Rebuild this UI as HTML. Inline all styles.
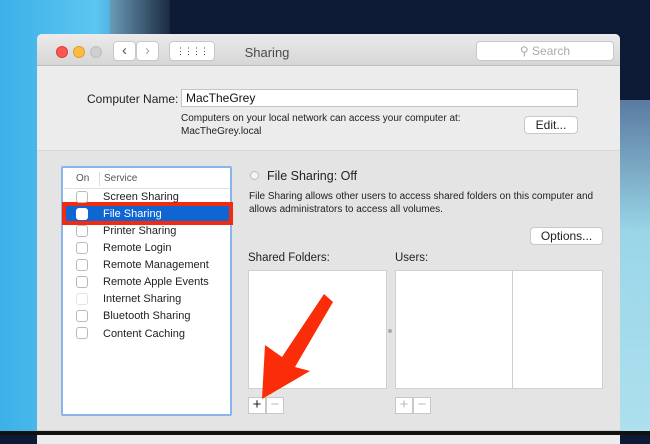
<!DOCTYPE html>
<html><head><style>
*{margin:0;padding:0;box-sizing:border-box}
body{width:650px;height:435px;overflow:hidden;position:relative;font-family:"Liberation Sans",sans-serif;background:#0d1a35}
.a{position:absolute}
.btn{position:absolute;background:#fff;border:1px solid #c8c8c8;border-radius:4px;font-size:12px;text-align:center;color:#222}
.t{position:absolute;font-size:11px;color:#222;white-space:nowrap}
.cb{position:absolute;left:76px;width:12px;height:12px;border:1px solid #b9b9b9;border-radius:3px;background:#fff}
</style></head><body>
<div class="a" style="left:0;top:0;width:160px;height:435px;background:linear-gradient(90deg,#3cb0e8,#5cc6f0 60%,#2a6ea0)"></div>
<div class="a" style="left:110px;top:0;width:60px;height:40px;background:linear-gradient(90deg,#6a9ab8,#1a2a40)"></div>
<div class="a" style="left:600px;top:100px;width:50px;height:335px;background:linear-gradient(180deg,#5a7aa0,#9ad6e8 40%,#aee0ee)"></div>
<div class="a" style="left:37px;top:34px;width:583px;height:410px;background:#ececec;border-radius:5px 5px 0 0;overflow:hidden">
 <div class="a" style="left:0;top:0;width:583px;height:32px;background:linear-gradient(#ebebeb,#d6d6d6);border-bottom:1px solid #bdbdbd"></div>
 <div class="a" style="left:19px;top:12px;width:12px;height:12px;border-radius:50%;background:#fc5753;border:1px solid #de3e3a"></div>
 <div class="a" style="left:36px;top:12px;width:12px;height:12px;border-radius:50%;background:#fdbc40;border:1px solid #de9f2c"></div>
 <div class="a" style="left:53px;top:12px;width:12px;height:12px;border-radius:50%;background:#cfcfcf;border:1px solid #bdbdbd"></div>
 <div class="btn" style="left:76px;top:7px;width:23px;height:20px;font-size:15px;line-height:17px;color:#555">&#8249;</div>
 <div class="btn" style="left:99px;top:7px;width:23px;height:20px;font-size:15px;line-height:17px;color:#aaa">&#8250;</div>
 <div class="btn" style="left:132px;top:7px;width:46px;height:20px;font-size:9px;line-height:18px;color:#444;letter-spacing:-1px">&#8942;&#8942;&#8942;&#8942;</div>
 <div class="t" style="left:200px;top:11px;width:60px;text-align:center;font-size:13px;color:#4a4a4a">Sharing</div>
 <div class="btn" style="left:439px;top:7px;width:138px;height:20px;line-height:18px;color:#aaa;font-size:12px">&#9906; Search</div>
 <div class="t" style="left:50px;top:58px;font-size:12px">Computer Name:</div>
 <div class="a" style="left:144px;top:55px;width:397px;height:18px;background:#fff;border:1px solid #c4c4c4"></div>
 <div class="t" style="left:149px;top:57px;font-size:12px;color:#111">MacTheGrey</div>
 <div class="t" style="left:144px;top:78px;font-size:10px;line-height:13px">Computers on your local network can access your computer at:<br>MacTheGrey.local</div>
 <div class="btn" style="left:487px;top:82px;width:54px;height:18px;line-height:16px">Edit...</div>
 <div class="a" style="left:0;top:116px;width:583px;height:1px;background:#d8d8d8"></div>
 <div class="a" style="left:0;top:117px;width:583px;height:280px;background:#e4e4e4"></div>
 <div class="a" style="left:0;top:396px;width:583px;height:1px;background:#d0d0d0"></div>
</div>
<div class="a" style="left:61px;top:166px;width:171px;height:250px;background:#fff;border:2px solid #8ab4ec;border-radius:2px"></div>
<div class="t" style="left:76px;top:173px;font-size:10px;color:#555">On</div>
<div class="a" style="left:99px;top:172px;width:1px;height:14px;background:#ddd"></div>
<div class="t" style="left:104px;top:173px;font-size:10px;color:#555">Service</div>
<div class="a" style="left:64px;top:188px;width:166px;height:1px;background:#e2e2e2"></div>
<div class="a" style="left:62px;top:202px;width:171px;height:23px;background:#f22a10"></div>
<div class="a" style="left:66px;top:206px;width:163px;height:15px;background:#0f65d1"></div>
<div class="cb" style="top:191px"></div><div class="t" style="left:103px;top:191px">Screen Sharing</div>
<div class="cb" style="top:208px;border-color:#fff"></div><div class="t" style="left:103px;top:208px;color:#fff">File Sharing</div>
<div class="cb" style="top:225px"></div><div class="t" style="left:103px;top:225px">Printer Sharing</div>
<div class="cb" style="top:242px"></div><div class="t" style="left:103px;top:242px">Remote Login</div>
<div class="cb" style="top:259px"></div><div class="t" style="left:103px;top:259px">Remote Management</div>
<div class="cb" style="top:276px"></div><div class="t" style="left:103px;top:276px">Remote Apple Events</div>
<div class="cb" style="top:293px;border-color:#e3e3e3"></div><div class="t" style="left:103px;top:293px">Internet Sharing</div>
<div class="cb" style="top:310px"></div><div class="t" style="left:103px;top:310px">Bluetooth Sharing</div>
<div class="cb" style="top:327px"></div><div class="t" style="left:103px;top:328px">Content Caching</div>
<div class="a" style="left:250px;top:171px;width:9px;height:9px;border-radius:50%;border:1px solid #bbb;background:#f4f4f4"></div>
<div class="t" style="left:267px;top:169px;font-size:12.5px">File Sharing: Off</div>
<div class="t" style="left:249px;top:190px;font-size:10px;line-height:13px">File Sharing allows other users to access shared folders on this computer and<br>allows administrators to access all volumes.</div>
<div class="btn" style="left:530px;top:227px;width:73px;height:18px;line-height:16px">Options...</div>
<div class="t" style="left:248px;top:252px;font-size:11.5px">Shared Folders:</div>
<div class="t" style="left:395px;top:252px;font-size:11.5px">Users:</div>
<div class="a" style="left:248px;top:270px;width:139px;height:119px;background:#fff;border:1px solid #cfcfcf"></div>
<div class="a" style="left:395px;top:270px;width:208px;height:119px;background:#fff;border:1px solid #cfcfcf"></div>
<div class="a" style="left:512px;top:270px;width:1px;height:119px;background:#cfcfcf"></div>
<div class="a" style="left:388px;top:329px;width:4px;height:4px;border-radius:50%;background:#aaa"></div>
<div class="btn" style="left:248px;top:397px;width:18px;height:17px;border-radius:0;line-height:14px;font-size:15px">+</div>
<div class="btn" style="left:266px;top:397px;width:18px;height:17px;border-radius:0;line-height:14px;font-size:15px;color:#bbb">&#8722;</div>
<div class="btn" style="left:395px;top:397px;width:18px;height:17px;border-radius:0;line-height:14px;font-size:15px;color:#bbb">+</div>
<div class="btn" style="left:413px;top:397px;width:18px;height:17px;border-radius:0;line-height:14px;font-size:15px;color:#bbb">&#8722;</div>
<svg class="a" style="left:0;top:0" width="650" height="435"><polygon fill="#fb2c08" points="262,399 265,345 282,357 324,294 333,302 295,367 310,371"/></svg>
<div class="a" style="left:0;top:431px;width:650px;height:4px;background:#111"></div>
</body></html>
